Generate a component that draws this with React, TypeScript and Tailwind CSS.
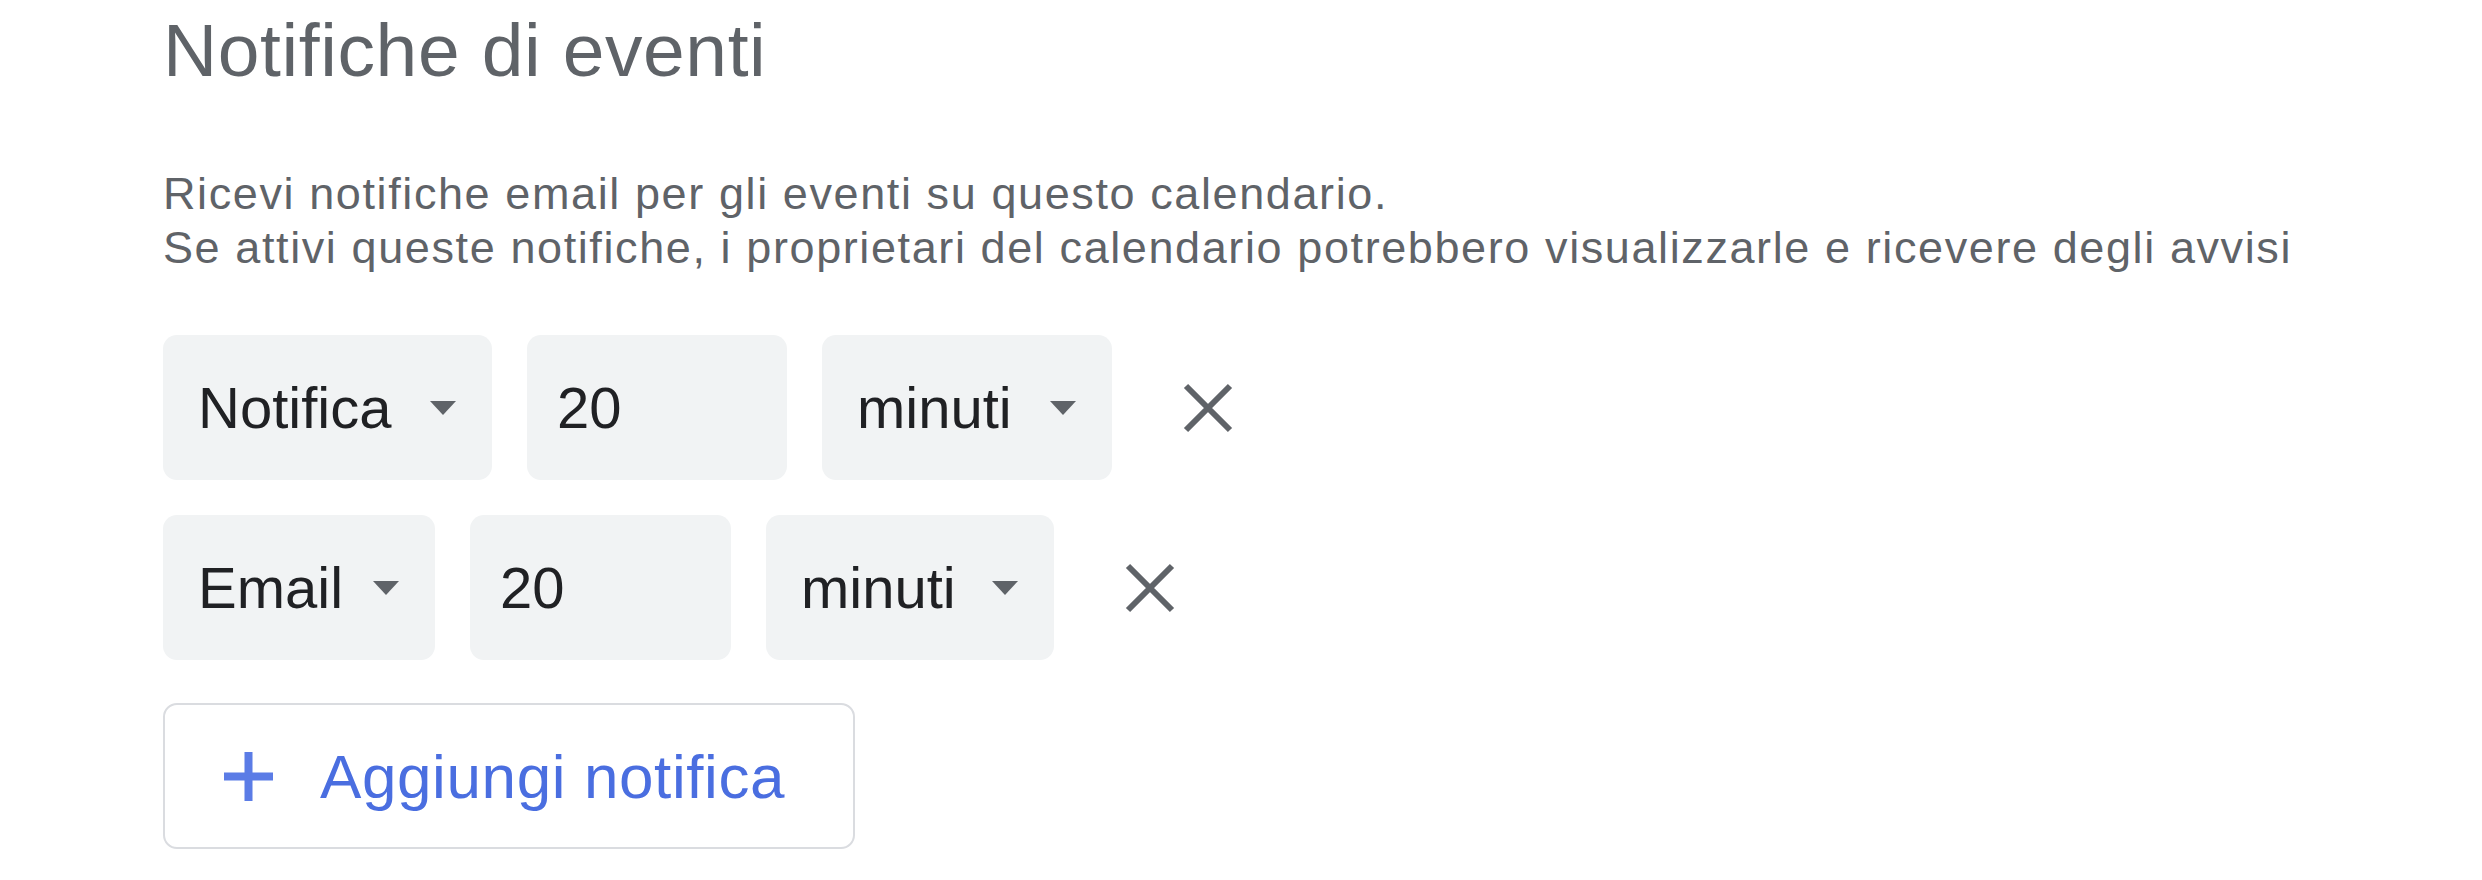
function Caret() {
  return (
    <svg width="26" height="14" viewBox="0 0 26 14" className="shrink-0">
      <path d="M0 0h26L13 14z" fill="#5f6368" />
    </svg>
  )
}

function CloseIcon() {
  return (
    <svg width="50" height="50" viewBox="0 0 50 50">
      <path d="M3 3L47 47M47 3L3 47" stroke="#5f6368" strokeWidth="6" />
    </svg>
  )
}

function PlusIcon() {
  return (
    <svg width="49" height="49" viewBox="0 0 49 49" className="shrink-0">
      <path d="M24.5 0v49M0 24.5h49" stroke="#5b7ce6" strokeWidth="8" />
    </svg>
  )
}

function DropBox({ label, width }: { label: string; width: string }) {
  return (
    <div
      className={`${width} h-[145px] shrink-0 flex items-center justify-between pl-[35px] pr-[36px] rounded-[14px] bg-[#f1f3f4] text-[58px] text-[#202124]`}
    >
      <span>{label}</span>
      <Caret />
    </div>
  )
}

function NumBox({ value, width }: { value: string; width: string }) {
  return (
    <div
      className={`${width} h-[145px] shrink-0 flex items-center pl-[30px] rounded-[14px] bg-[#f1f3f4] text-[58px] text-[#202124]`}
    >
      {value}
    </div>
  )
}

function Row({ type, typeW, numW, unitW }: { type: string; typeW: string; numW: string; unitW: string }) {
  return (
    <div className="flex items-center gap-[35px]">
      <DropBox label={type} width={typeW} />
      <NumBox value="20" width={numW} />
      <DropBox label="minuti" width={unitW} />
      <button className="w-[122px] h-[122px] flex items-center justify-center">
        <CloseIcon />
      </button>
    </div>
  )
}

export default function App() {
  return (
    <div className="w-[2482px] h-[880px] bg-white pl-[163px] font-['Liberation_Sans',Arial,sans-serif]">
      <h2 className="pt-[13px] text-[75px] leading-[74px] tracking-[0.6px] text-[#5f6368] font-normal">
        Notifiche di eventi
      </h2>
      <div className="mt-[80px] text-[45px] leading-[54px] tracking-[1.6px] text-[#5f6368]">
        <p>Ricevi notifiche email per gli eventi su questo calendario.</p>
        <p>Se attivi queste notifiche, i proprietari del calendario potrebbero visualizzarle e ricevere degli avvisi</p>
      </div>
      <div className="mt-[60px] flex flex-col gap-[35px]">
        <Row type="Notifica" typeW="w-[329px]" numW="w-[260px]" unitW="w-[290px]" />
        <Row type="Email" typeW="w-[272px]" numW="w-[261px]" unitW="w-[288px]" />
      </div>
      <button className="mt-[43px] w-[692px] h-[146px] flex items-center pl-[59px] gap-[47px] rounded-[14px] border-2 border-[#dadce0] text-[#4a6ee0] text-[62px] tracking-[0.6px]">
        <PlusIcon />
        <span>Aggiungi notifica</span>
      </button>
    </div>
  )
}
